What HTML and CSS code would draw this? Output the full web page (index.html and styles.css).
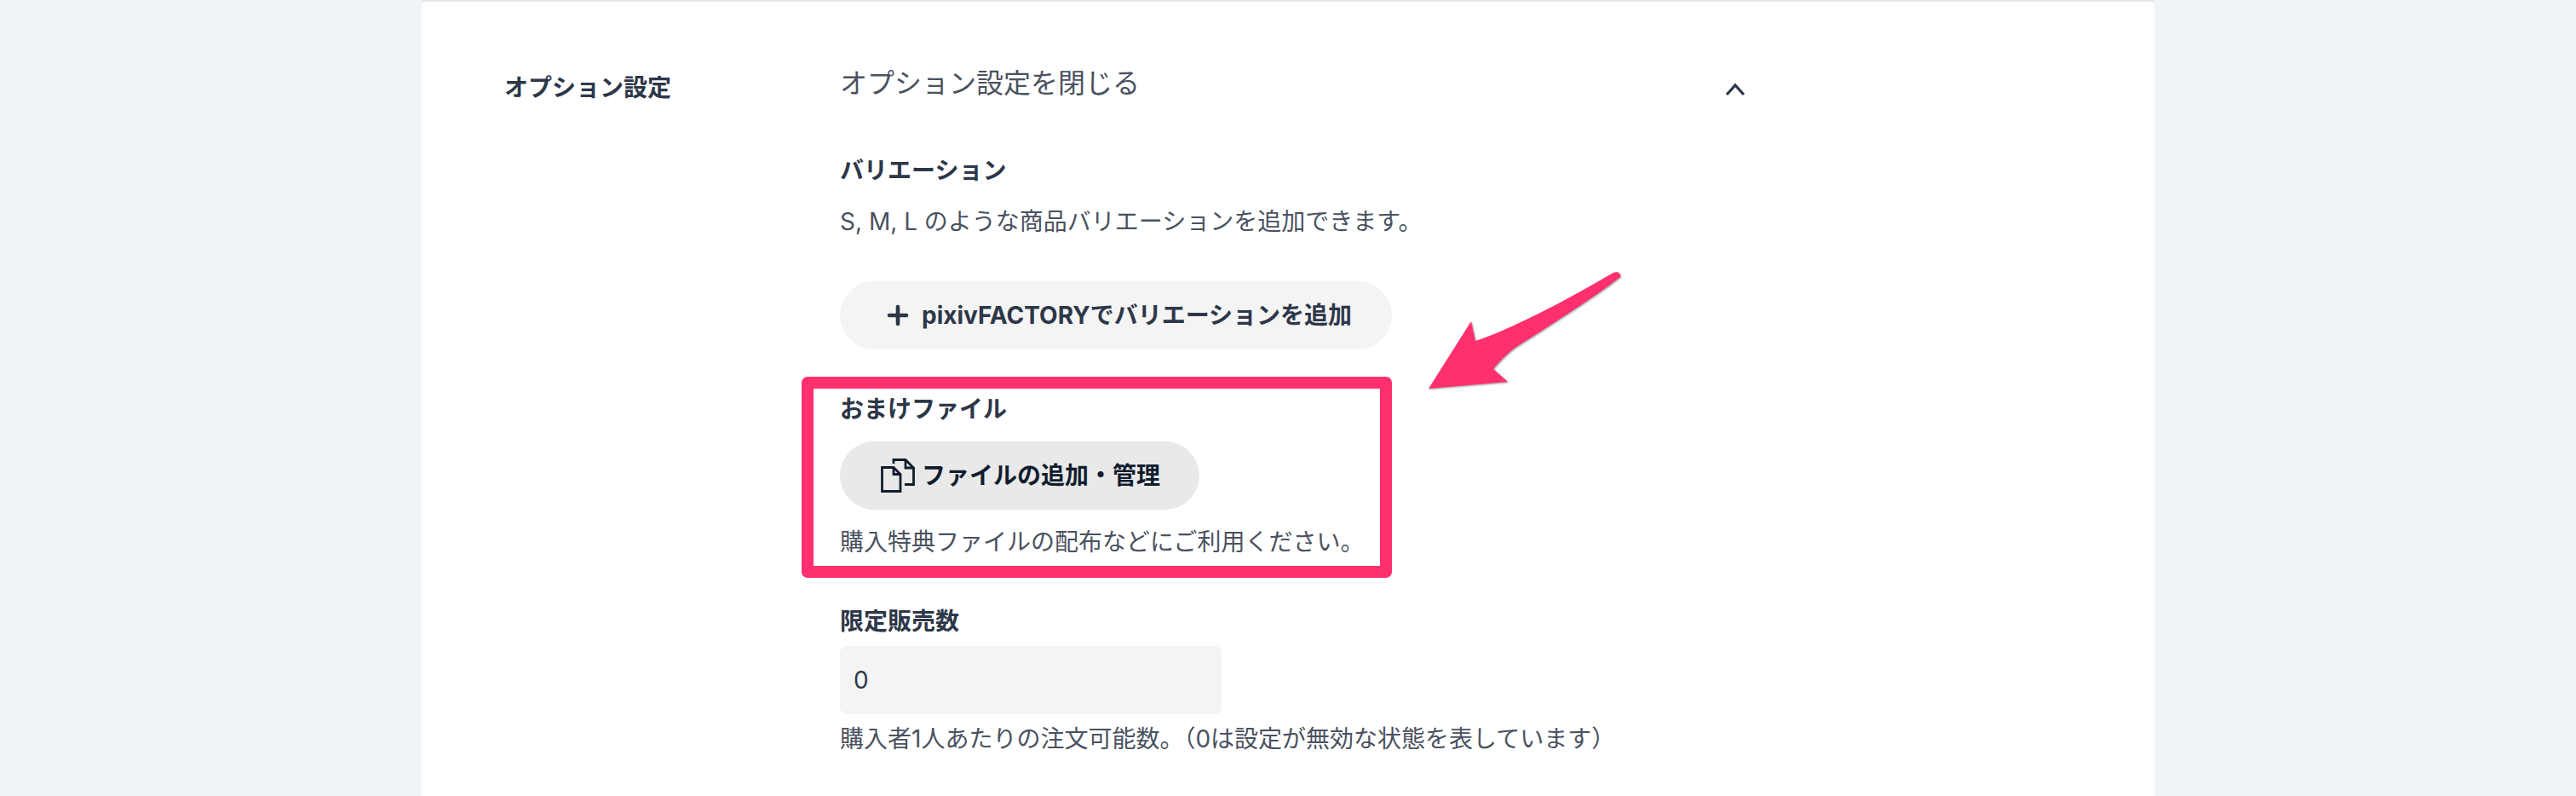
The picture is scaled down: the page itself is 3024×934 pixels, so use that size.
FILE: index.html
```html
<!DOCTYPE html>
<html lang="ja">
<head>
	<meta charset="UTF-8">
	<title>オプション設定</title>
	<link rel="stylesheet" href="styles.css">
</head>
<body>
	<div class="card">
		<div class="row">
			<div class="row_label">オプション設定</div>
			<div class="row_body">
				<div class="toggle">
					<span>オプション設定を閉じる</span>
					<svg class="chevron" width="24" height="16" viewBox="0 0 24 16"><path d="M2 14L12 3L22 14" fill="none" stroke="#2d3748" stroke-width="3.2"/></svg>
				</div>

				<div class="title variation_title">バリエーション</div>
				<div class="note variation_note">S, M, L のような商品バリエーションを追加できます。</div>
				<button class="pill factory_btn">
					<svg class="plus" width="26" height="26" viewBox="0 0 26 26"><path d="M13 3V23M3 13H23" fill="none" stroke="#2d3748" stroke-width="4.6" stroke-linecap="round"/></svg>
					<span class="pill_text">pixivFACTORYでバリエーションを追加</span>
				</button>

				<div class="extra">
					<div class="title">おまけファイル</div>
					<button class="pill file_btn">
						<svg class="files" width="40" height="40" viewBox="0 0 40 40"><path d="M1.5 10.5H15L23 18.5V38.5H1.5ZM15 10.5V18.5H23M15 6V1.5H29L38.5 11V30.5H28M29 1.5V11H38.5" fill="none" stroke="#111d2e" stroke-width="2.8"/></svg>
						<span class="pill_text">ファイルの追加・管理</span>
					</button>
					<div class="note extra_note">購入特典ファイルの配布などにご利用ください。</div>
				</div>

				<div class="title limit_title">限定販売数</div>
				<input class="limit_input" type="text" value="0">
				<div class="note limit_note">購入者1人あたりの注文可能数。（0は設定が無効な状態を表しています）</div>
			</div>
		</div>
	</div>

	<!-- annotation arrow over the page -->
	<svg class="arrow" width="240" height="150" viewBox="0 0 240 150">
		<path class="arrow_head" d="M224 10C228 8 233 10 232 15C200 40 140 78 110 97C100 104 90 114 83 123L100 138L7 146L57 67L62 90C100 77 150 53 224 10Z"/>
	</svg>
</body>
</html>
```

FILE: styles.css
```css
*{
	margin: 0;
	padding: 0;
	box-sizing: border-box;
}
html,body{
	height: 934px;
	overflow: hidden;
}
body{
	position: relative;
	background: #f0f4f7;
	font-family: "Inter", "Noto Sans CJK JP", sans-serif;
	font-size: 28px;
	line-height: 40px;
	color: #4a5160;
}
.card{
	width: 2034px;
	height: 934px;
	margin: 0 auto;
	padding: 80px 0 0 97px;
	background: #fff;
	border-top: 2px solid #e5e7eb;
}
.row{
	display: flex;
}
.row_label{
	width: 394px;
	padding-top: 1px;
	font-weight: 700;
	color: #2d3748;
}
.row_body{
	width: 1080px;
}
.toggle{
	display: flex;
	justify-content: space-between;
	align-items: center;
	height: 40px;
	margin-top: -4px;
	font-size: 32px;
	color: #4a5160;
}
.chevron{
	margin: 14px 17px 0 0;
}
.title{
	font-weight: 700;
	color: #2d3748;
}
.variation_title{
	margin-top: 62px;
}
.variation_note{
	margin-top: 20px;
}
.pill{
	display: flex;
	align-items: center;
	height: 80px;
	border: none;
	border-radius: 40px;
	background: #f4f4f4;
	font-family: inherit;
	font-size: 28px;
	font-weight: 700;
	color: #2d3748;
}
.pill_text{
	padding-bottom: 4px;
}
.factory_btn{
	width: 648px;
	margin-top: 50px;
	padding-left: 55px;
}
.plus{
	margin-right: 15px;
}
.extra{
	width: 693px;
	height: 236px;
	margin: 32px 0 0 -45px;
	padding: 4px 0 0 31px;
	border: 14px solid #ff306d;
	border-radius: 7px;
}
.file_btn{
	width: 422px;
	margin-top: 18px;
	padding-left: 48px;
	background: #e9e9e9;
	color: #111d2e;
}
.files{
	margin-right: 8px;
}
.extra_note{
	margin-top: 18px;
}
.limit_title{
	margin-top: 31px;
}
.limit_input{
	display: block;
	width: 448px;
	height: 80px;
	margin-top: 9px;
	padding: 0 16px;
	border: none;
	border-radius: 8px;
	background: #f4f4f4;
	font-family: inherit;
	font-size: 28px;
	color: #2d3748;
}
.limit_note{
	margin-top: 9px;
}
.arrow{
	position: absolute;
	left: 1670px;
	top: 310px;
}
.arrow_head{
	fill: #ff306d;
	filter: drop-shadow(1px 1px 1px rgba(0,0,0,.4));
}
```
